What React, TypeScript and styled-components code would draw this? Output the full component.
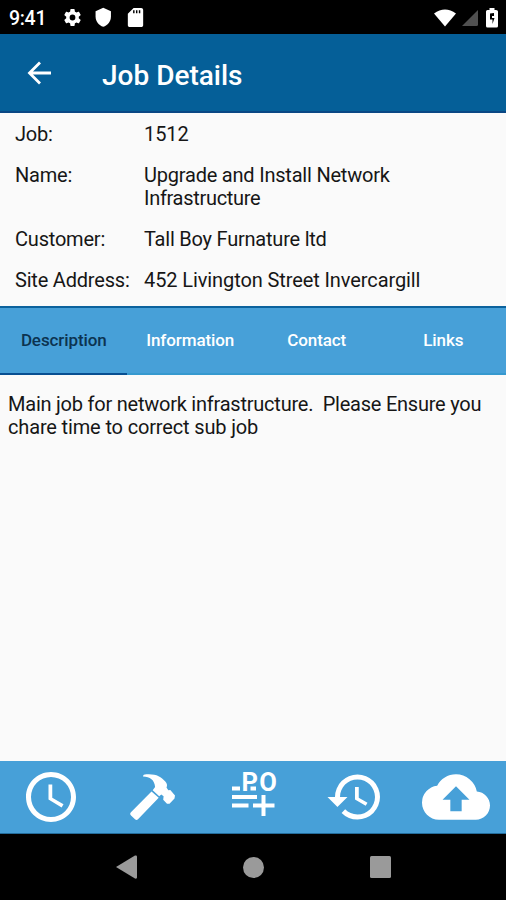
import React from "react";
import styled, { createGlobalStyle } from "styled-components";

const GlobalStyle = createGlobalStyle`
  * { box-sizing: border-box; }
  body { margin: 0; background: #fafafa; font-family: Roboto, "Liberation Sans", sans-serif; color: #161616; }
  svg { display: block; flex: none; }
`;

const Screen = styled.div`
  display: flex;
  flex-direction: column;
  width: 100%;
  height: 900px;
  background: #fafafa;
  overflow: hidden;
`;

const StatusBar = styled.div`
  display: flex;
  justify-content: space-between;
  height: 34px;
  padding: 1px 6px 0 9px;
  background: #000;
  color: #fff;
`;

const StatusGroup = styled.div<{ $gap: number }>`
  display: flex;
  align-items: center;
  gap: ${(p) => p.$gap}px;
`;

const Time = styled.span`
  width: 42.5px;
  padding-top: 1px;
  font-size: 19.5px;
  font-weight: 500;
  letter-spacing: -0.3px;
`;

const AppBar = styled.header`
  display: flex;
  align-items: center;
  height: 79px;
  padding: 0 25px;
  gap: 49px;
  background: #055f98;
  border-bottom: 2px solid #0a4784;
  color: #fff;
`;

const BackButton = styled.button`
  display: flex;
  padding: 0;
  border: 0;
  background: none;
  color: #fff;
`;

const Title = styled.h1`
  margin: 6px 0 0;
  font-size: 28px;
  line-height: 32px;
  font-weight: 500;
`;

const Details = styled.dl`
  display: grid;
  grid-template-columns: 129px 1fr;
  align-content: start;
  row-gap: 17.8px;
  height: 193px;
  margin: 0;
  padding: 10px 80px 0 15px;
  font-size: 20px;
  line-height: 23.2px;
`;

const Term = styled.dt`
  white-space: nowrap;
  letter-spacing: -0.2px;
`;

const Value = styled.dd`
  margin: 0;
`;

const Line = styled.div<{ $tracking: number }>`
  white-space: pre;
  letter-spacing: ${(p) => p.$tracking}px;
`;

const Tabs = styled.nav`
  display: grid;
  grid-template-columns: repeat(4, 1fr);
  height: 69px;
  background: #47a0d8;
  border-top: 2px solid #0b629d;
`;

const Tab = styled.button<{ $active?: boolean }>`
  padding: 0 0 1px 1px;
  border: 0;
  border-bottom: 2px solid ${(p) => (p.$active ? "#084f91" : "#3699cf")};
  background: none;
  color: ${(p) => (p.$active ? "#0c3350" : "#fff")};
  font: 500 17px/22px Roboto, sans-serif;
  letter-spacing: -0.1px;
`;

const Description = styled.div`
  flex: 1;
  padding: 17.5px 8px;
  font-size: 20px;
  line-height: 23.2px;
`;

const ActionBar = styled.div`
  display: grid;
  grid-template-columns: repeat(5, 101.4px);
  height: 73px;
  background: #47a0d8;
  border-bottom: 1px solid #236c9b;
`;

const Action = styled.button`
  display: flex;
  align-items: center;
  justify-content: center;
  padding: 0;
  border: 0;
  background: none;
  color: #fff;
`;

const NavBar = styled.div`
  display: flex;
  justify-content: center;
  align-items: center;
  gap: 106px;
  height: 66px;
  background: #000;
  color: #9a9a9a;
`;

const OrderLabel = styled.text`
  font: 700 25.5px Roboto, sans-serif;
  letter-spacing: 1.2px;
`;

type IconProps = { size: number; d: string };
const Icon = ({ size, d }: IconProps) => (
  <svg width={size} height={size} viewBox="0 0 24 24" fill="currentColor">
    <path fillRule="evenodd" d={d} />
  </svg>
);

const paths = {
  gear: "M19.14 12.94c.04-.3.06-.61.06-.94s-.02-.64-.07-.94l2.03-1.58a.49.49 0 0 0 .12-.61l-1.92-3.32a.49.49 0 0 0-.59-.22l-2.39.96a7 7 0 0 0-1.62-.94l-.36-2.54a.48.48 0 0 0-.48-.41h-3.84a.48.48 0 0 0-.47.41l-.36 2.54c-.59.24-1.13.57-1.62.94l-2.39-.96a.48.48 0 0 0-.59.22L2.74 8.87a.48.48 0 0 0 .12.61l2.03 1.58c-.05.3-.09.63-.09.94s.02.64.07.94l-2.03 1.58a.49.49 0 0 0-.12.61l1.92 3.32c.12.22.37.29.59.22l2.39-.96c.5.38 1.03.7 1.62.94l.36 2.54c.05.24.24.41.48.41h3.84c.24 0 .44-.17.47-.41l.36-2.54a7 7 0 0 0 1.62-.94l2.39.96c.22.08.47 0 .59-.22l1.92-3.32a.48.48 0 0 0-.12-.61zM12 15.3a3.3 3.3 0 1 1 0-6.6 3.3 3.3 0 0 1 0 6.6z",
  shield: "M12 1 3 5v6c0 5.55 3.84 10.74 9 12 5.16-1.26 9-6.45 9-12V5z",
  card: "M18 2h-8L4 8v12c0 1.1.9 2 2 2h12c1.1 0 2-.9 2-2V4c0-1.1-.9-2-2-2zm-7 5.500H9.500V4.500H11v3zm3 0h-1.500V4.500H14v3zm3 0h-1.500V4.500H17v3z",
  clock: "M11.99 2C6.47 2 2 6.48 2 12s4.47 10 9.99 10C17.52 22 22 17.52 22 12S17.52 2 11.99 2zM12 20a8 8 0 1 1 0-16 8 8 0 0 1 0 16zm.5-13H11v6l5.25 3.15.75-1.23-4.5-2.67z",
  history: "M13 3a9 9 0 0 0-9 9H1l3.89 3.89.07.14L9 12H6c0-3.87 3.13-7 7-7s7 3.13 7 7-3.13 7-7 7c-1.93 0-3.68-.79-4.94-2.06l-1.42 1.42A8.95 8.95 0 0 0 13 21a9 9 0 0 0 0-18zm-1 5v5l4.28 2.54.72-1.21-3.5-2.08V8z",
  cloud: "M19.35 10.04A7.49 7.49 0 0 0 12 4C9.11 4 6.6 5.64 5.35 8.04A5.99 5.99 0 0 0 0 14c0 3.31 2.69 6 6 6h13c2.76 0 5-2.24 5-5 0-2.64-2.05-4.78-4.65-4.96zM14 13v4h-4v-4H7.250L12 8.200 16.750 13z",
};

const HammerIcon = () => (
  <svg width="46" height="48" viewBox="129 773 46 48" fill="currentColor">
    <path d="M151.500 791.500 158.700 797.700 138 819.300Q136.500 820.500 135 819.200L131 815.400Q129.300 814 130.700 812.500Z" />
    <path d="M143 776.500Q143 774 147 774.200C156 773.700 161 776.500 165.300 781.500Q168 784.500 166.500 787.500L168.300 790.300 170.300 790 175 795.600 174.500 798.600 169.500 803.700 167 803.700 163.200 799.700 163.600 796.200 161.300 794.500 159.200 796.300 152.700 790.300 155.100 787C154.500 780 150 776.500 143 776.500Z" />
  </svg>
);

const PurchaseOrderIcon = () => (
  <svg width="54" height="70" viewBox="226 762 54 70" fill="currentColor">
    <OrderLabel x="241.500" y="790.500">PO</OrderLabel>
    <path d="M232 786.500h8v4h-8zM250.500 786.500h5.500v4h-5.500zM232 795h25v4h-25zM232 803.500h16.500v4h-16.500zM253 803.500h8.500v-8.500h4v8.500h9v4h-9v8.500h-4v-8.500h-8.500z" />
  </svg>
);

type TextLine = { text: string; tracking: number };
const details: { label: string; lines: TextLine[] }[] = [
  { label: "Job:", lines: [{ text: "1512", tracking: -0.1 }] },
  {
    label: "Name:",
    lines: [
      { text: "Upgrade and Install Network", tracking: -0.21 },
      { text: "Infrastructure", tracking: -0.3 },
    ],
  },
  { label: "Customer:", lines: [{ text: "Tall Boy Furnature ltd", tracking: -0.22 }] },
  { label: "Site Address:", lines: [{ text: "452 Livington Street Invercargill", tracking: -0.1 }] },
];

const description: TextLine[] = [
  { text: "Main job for network infrastructure.  Please Ensure you", tracking: -0.23 },
  { text: "chare time to correct sub job", tracking: -0.15 },
];

const tabs = ["Description", "Information", "Contact", "Links"];

const Lines = ({ lines }: { lines: TextLine[] }) => (
  <>
    {lines.map(({ text, tracking }) => (
      <Line key={text} $tracking={tracking}>
        {text}
      </Line>
    ))}
  </>
);

export default function App() {
  return (
    <>
      <GlobalStyle />
      <Screen>
        <StatusBar>
          <StatusGroup $gap={10.2}>
            <Time>9:41</Time>
            <Icon size={21} d={paths.gear} />
            <Icon size={20.5} d={paths.shield} />
            <Icon size={23} d={paths.card} />
          </StatusGroup>
          <StatusGroup $gap={6}>
            <svg width="22" height="18" viewBox="0 0 22 18" fill="currentColor">
              <path d="M0 4.500Q11-3.500 22 4.500L11 17.500Z" />
            </svg>
            <svg width="16" height="16" viewBox="0 0 16 16" fill="#505050">
              <path d="M16 0v14.500q0 1.500-1.500 1.500H0z" />
            </svg>
            <svg width="16" height="20" viewBox="0 0 16 20" fill="currentColor">
              <path d="M5.500 0h5v2h1.500q2 0 2 1.500v14.500q0 1.500-1.500 1.500h-9q-1.500 0-1.500-1.500V3.500Q2 2 3.500 2h2z" />
              <path fill="#000" d="M10 5 6 5.500v6h2.500v4.500L10.500 10H8V8h2z" />
            </svg>
          </StatusGroup>
        </StatusBar>
        <AppBar>
          <BackButton aria-label="Back">
            <svg width="28" height="28" viewBox="0 0 28 28" fill="none" stroke="currentColor" strokeWidth="2.8">
              <path d="M15 3.500 4.500 14 15 24.500M4.500 14H26" />
            </svg>
          </BackButton>
          <Title>Job Details</Title>
        </AppBar>
        <Details>
          {details.map(({ label, lines }) => (
            <React.Fragment key={label}>
              <Term>{label}</Term>
              <Value>
                <Lines lines={lines} />
              </Value>
            </React.Fragment>
          ))}
        </Details>
        <Tabs>
          {tabs.map((name, i) => (
            <Tab key={name} $active={i === 0}>
              {name}
            </Tab>
          ))}
        </Tabs>
        <Description>
          <Lines lines={description} />
        </Description>
        <ActionBar>
          <Action aria-label="Time"><Icon size={60} d={paths.clock} /></Action>
          <Action aria-label="Work"><HammerIcon /></Action>
          <Action aria-label="Purchase order"><PurchaseOrderIcon /></Action>
          <Action aria-label="History"><Icon size={60} d={paths.history} /></Action>
          <Action aria-label="Upload"><Icon size={68} d={paths.cloud} /></Action>
        </ActionBar>
        <NavBar>
          <svg width="21" height="24" viewBox="0 0 21 24" fill="currentColor"><path d="M0 12 19 .500Q21 0 21 1.500v21q0 1.500-2 1z" /></svg>
          <svg width="21" height="21" viewBox="0 0 21 21" fill="currentColor"><circle cx="10.500" cy="10.500" r="10.500" /></svg>
          <svg width="21" height="22" viewBox="0 0 21 22" fill="currentColor"><rect width="21" height="22" rx="1.500" /></svg>
        </NavBar>
      </Screen>
    </>
  );
}
